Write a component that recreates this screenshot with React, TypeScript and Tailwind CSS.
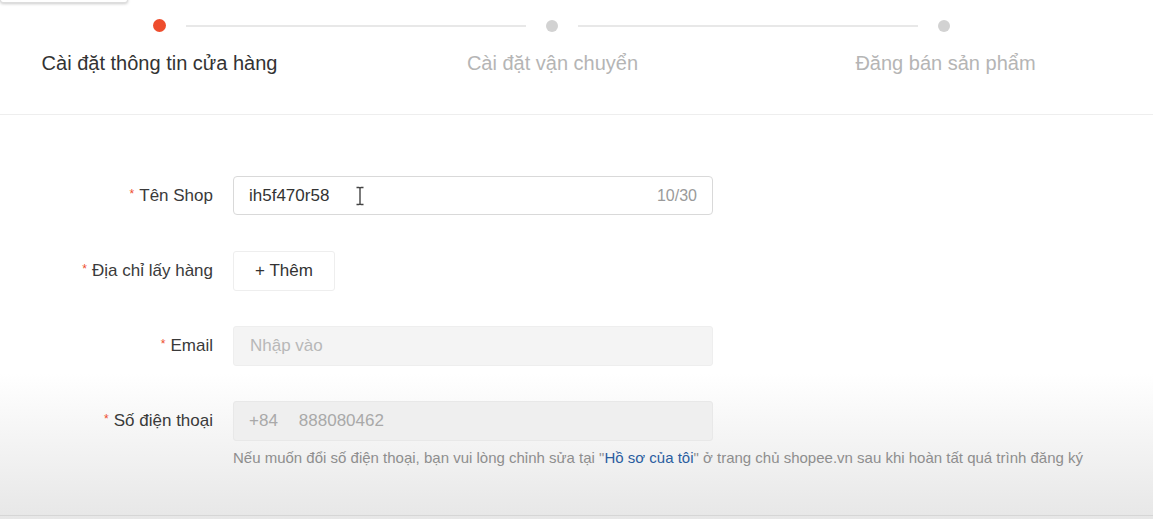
import React from 'react';

const steps = ['Cài đặt thông tin cửa hàng', 'Cài đặt vận chuyển', 'Đăng bán sản phẩm'];

const Label: React.FC<{ text: string }> = ({ text }) => (
  <div className="flex items-center justify-end h-10 text-[17px] text-[#3a3a3a]">
    <span className="text-[12px] text-[#ee4d2d] mr-[5px] -mt-[4px]">*</span>
    {text}
  </div>
);

export default function App() {
  return (
    <div
      className="relative w-full h-[519px] overflow-hidden pb-[3px] bg-[linear-gradient(to_bottom,#ffffff_0%,#ffffff_72%,#e7e7e7_100%)]"
      style={{ fontFamily: '"Liberation Sans", Arial, sans-serif' }}
    >
      {/* popup edge at the top left */}
      <div className="absolute left-0 -top-[20px] w-[128px] h-[23px] bg-white border border-[#ddd] rounded-[3px] shadow-[0_1px_3px_rgba(0,0,0,0.2)] z-10" />

      <div className="h-full flex flex-col border-b border-[#d6d6d6]">
        {/* Stepper */}
        <div className="h-[115px] border-b border-[#eeeeee] pt-[19px] shrink-0">
          <div className="flex items-center pl-[153px]">
            <div className="w-[13px] h-[13px] rounded-full bg-[#ee4d2d]" />
            <div className="w-[340px] h-[2px] mx-[20px] bg-[#e8e8e8]" />
            <div className="w-[12px] h-[12px] rounded-full bg-[#d2d2d2]" />
            <div className="w-[340px] h-[2px] mx-[20px] bg-[#e8e8e8]" />
            <div className="w-[12px] h-[12px] rounded-full bg-[#d2d2d2]" />
          </div>
          <div className="grid grid-cols-3 w-[1179px] -ml-[37px] mt-[19px]">
            {steps.map((s, i) => (
              <div
                key={s}
                className={`text-center text-[20px] leading-[24px] ${i === 0 ? 'text-[#333]' : 'text-[#b5b5b5]'}`}
              >
                {s}
              </div>
            ))}
          </div>
        </div>

        {/* Form */}
        <div className="flex-1 pt-[61px]">
          <div className="grid grid-cols-[213px_480px] gap-x-[20px] gap-y-[35px]">
            <Label text="Tên Shop" />
            <div className="relative h-[39px] flex items-center justify-between border border-[#d9d9d9] rounded-[4px] px-[15px] text-[17px]">
              <span className="text-[#333]">ih5f470r58</span>
              <span className="text-[#9a9a9a] text-[16px]">10/30</span>
              <svg
                className="absolute left-[121px] top-[9px]"
                width="10"
                height="20"
                viewBox="0 0 10 20"
                fill="none"
                stroke="#444"
                strokeWidth="1.4"
              >
                <path d="M1.5 1.5h2.5c0.7 0 1 0.4 1 1v15c0 0.6 0.3 1 1 1h2.5M8.5 1.5H6c-0.7 0-1 0.4-1 1M1.5 18.5H4c0.7 0 1-0.4 1-1" />
              </svg>
            </div>

            <Label text="Địa chỉ lấy hàng" />
            <div>
              <button className="h-10 w-[102px] border border-[#eeeeee] rounded-[3px] bg-white text-[17px] text-[#333]">
                + Thêm
              </button>
            </div>

            <Label text="Email" />
            <div className="h-10 flex items-center bg-[#f4f4f4] border border-[#eeeeee] rounded-[3px] px-[16px] text-[17px] text-[#b8b8b8]">
              Nhập vào
            </div>

            <Label text="Số điện thoại" />
            <div>
              <div className="h-10 flex items-center bg-[#efefef] border border-[#e8e8e8] rounded-[3px] px-[15px] text-[17px] text-[#a9a9a9]">
                <span className="mr-[21px]">+84</span>
                <span>888080462</span>
              </div>
            </div>
          </div>
          <div className="ml-[233px] mt-[6px] text-[15px] text-[#8e8e8e] whitespace-nowrap">
            Nếu muốn đổi số điện thoại, bạn vui lòng chỉnh sửa tại "<span className="text-[#2a5d9f]">Hồ sơ của tôi</span>" ở trang chủ shopee.vn sau khi hoàn tất quá trình đăng ký
          </div>
        </div>
      </div>
    </div>
  );
}
